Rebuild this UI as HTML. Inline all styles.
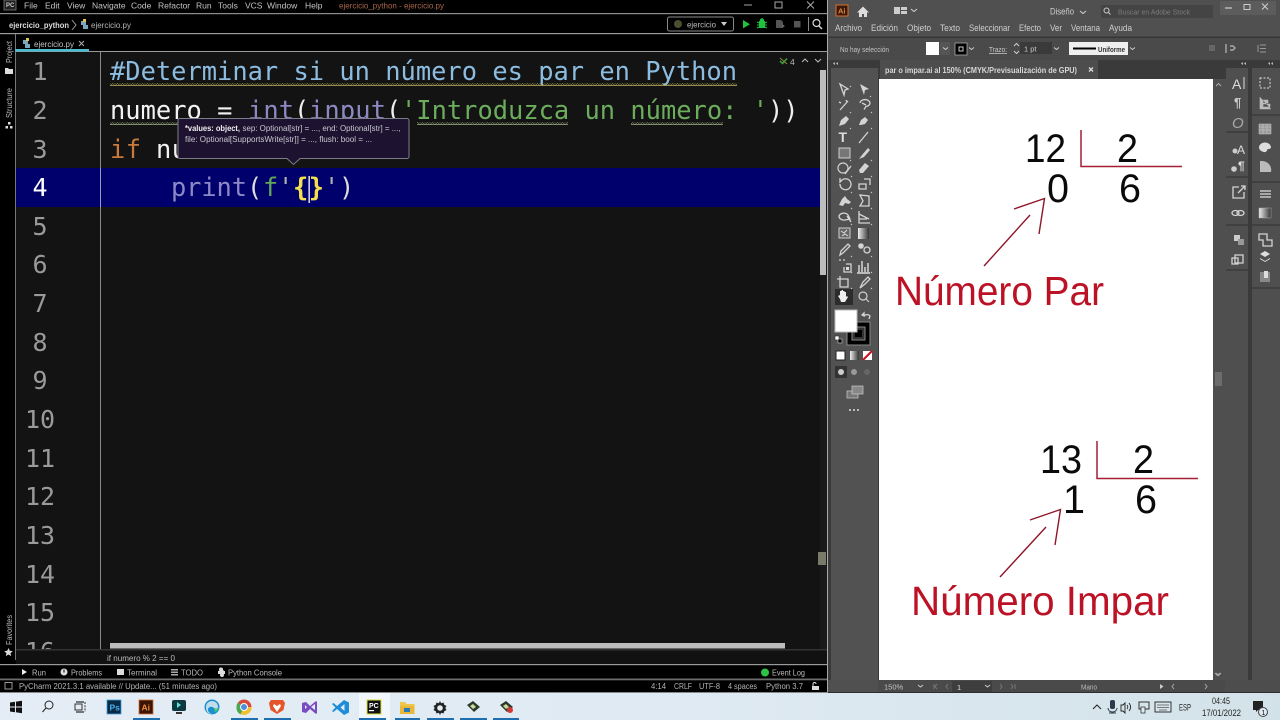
<!DOCTYPE html>
<html><head><meta charset="utf-8"><title>Screen</title>
<style>
html,body{margin:0;padding:0;width:1280px;height:720px;overflow:hidden;background:#000}
svg{display:block;filter:blur(.3px)}
text{font-family:"Liberation Sans",sans-serif;white-space:pre}
.code{font-family:"DejaVu Sans Mono","Liberation Mono",monospace;font-size:25.4px}
.ln{font-family:"DejaVu Sans Mono","Liberation Mono",monospace;font-size:25px;fill:#9a9a9a;text-anchor:middle}
.m{font-size:8.5px;fill:#c4c4c4}
.b{font-size:8.5px;fill:#c8c8c8}
.ai{font-size:8.8px;fill:#cfcfcf}
.rot{font-size:8px;fill:#bbb}
.num{font-size:40px;fill:#0a0a0a}
.red{font-size:41px;fill:#bc1226}
.ti{fill:none;stroke:#d4d4d4;stroke-width:1.3}
.tf{fill:#d4d4d4}
.tk{font-size:9.5px;fill:#222}
</style></head><body>
<svg width="1280" height="720" viewBox="0 0 1280 720" xmlns="http://www.w3.org/2000/svg">
<defs>
<pattern id="sqY" width="5" height="3" patternUnits="userSpaceOnUse"><path d="M0 2.2L1.25 .8 2.5 2.2 3.75 .8 5 2.2" fill="none" stroke="#b3a858" stroke-width=".9"/></pattern>
<pattern id="sqG" width="5" height="3" patternUnits="userSpaceOnUse"><path d="M0 2.2L1.25 .8 2.5 2.2 3.75 .8 5 2.2" fill="none" stroke="#9aaa80" stroke-width=".9"/></pattern>
<linearGradient id="tb" x1="0" x2="1" y1="0" y2="0"><stop offset="0" stop-color="#e4edf5"/><stop offset=".55" stop-color="#dfeaf2"/><stop offset="1" stop-color="#d3e2e9"/></linearGradient>
<linearGradient id="gr" x1="0" x2="1" y1="0" y2="0"><stop offset="0" stop-color="#eee"/><stop offset="1" stop-color="#333"/></linearGradient>
</defs>

<!-- PyCharm window -->
<rect width="828" height="693" fill="#000"/>
<rect x="0" y="13" width="827" height="1.2" fill="#8c8c8c"/>
<rect x="0" y="33" width="827" height="1.2" fill="#9a9a9a"/>
<rect x="15" y="51" width="812" height="1.2" fill="#9a9a9a"/>
<rect x="15" y="34" width="1" height="626" fill="#777"/>
<rect x="16" y="52" width="804" height="597" fill="#131313"/>
<rect x="16" y="168" width="804" height="39" fill="#00006c"/>
<rect x="100" y="52" width="1" height="597" fill="#8a8a8a"/>
<rect x="100" y="168" width="1" height="39" fill="#9a9ac0"/>
<rect x="820" y="52" width="7" height="597" fill="#1a1a1a"/>
<rect x="820" y="70" width="6" height="205" fill="#bdbdbd"/>
<rect x="818" y="552" width="8" height="13" fill="#7a7a6a"/>
<rect x="827" y="0" width="1" height="693" fill="#aaa"/>

<!-- menu -->
<rect x="4" y="0" width="12" height="10" fill="#222" stroke="#888" stroke-width=".7"/>
<text x="6" y="7" font-size="6" font-weight="bold" fill="#ccc">PC</text>
<text class="m" x="24" y="8.5">File</text><text class="m" x="45" y="8.5">Edit</text><text class="m" x="67" y="8.5">View</text>
<text class="m" x="92" y="8.5">Navigate</text><text class="m" x="131" y="8.5">Code</text><text class="m" x="158" y="8.5">Refactor</text>
<text class="m" x="196" y="8.5">Run</text><text class="m" x="218" y="8.5">Tools</text><text class="m" x="245" y="8.5">VCS</text>
<text class="m" x="267" y="8.5">Window</text><text class="m" x="305" y="8.5">Help</text>
<text x="339" y="8.5" font-size="8.5" fill="#a8664c" textLength="105" lengthAdjust="spacingAndGlyphs">ejercicio_python - ejercicio.py</text>
<path d="M744 5h8" stroke="#888" stroke-width="1.2"/>
<rect x="775" y="2" width="7" height="6" fill="none" stroke="#aaa"/>
<path d="M807 1.5l7 7M814 1.5l-7 7" stroke="#aaa" fill="none"/>

<!-- breadcrumb -->
<text x="9" y="28" font-size="8.5" font-weight="bold" fill="#ddd" textLength="60" lengthAdjust="spacingAndGlyphs">ejercicio_python</text>
<path d="M72 20l4 5-4 5" fill="none" stroke="#999"/>
<path d="M81 21h5v4h-5zM83 25h5v4h-5z" fill="#7aa7c0"/><rect x="83" y="19" width="3" height="3" fill="#e0c050"/>
<text x="91" y="28" font-size="8.5" fill="#b4b4b4" textLength="40" lengthAdjust="spacingAndGlyphs">ejercicio.py</text>
<rect x="667.5" y="17" width="66" height="14" rx="2" fill="#000" stroke="#8a8a8a"/>
<circle cx="678" cy="24" r="4" fill="#4d4d30"/>
<text x="687" y="27.5" font-size="8.5" fill="#bbb" textLength="29" lengthAdjust="spacingAndGlyphs">ejercicio</text>
<path d="M721 22h6l-3 4z" fill="#ccc"/>
<path d="M743 20l7 4.2-7 4.2z" fill="#22c23c"/>
<path d="M759 21h6v7h-6z" fill="#21c040"/><circle cx="762" cy="20.5" r="2.2" fill="#21c040"/><path d="M757 22l2 1M767 22l-2 1M757 25h2M765 25h2M757 28l2-1M767 28l-2-1" stroke="#21c040"/>
<path d="M776 20h5l2 2v6h-7z" fill="#555"/><path d="M782 24l3 2-3 2z" fill="#666"/>
<rect x="794" y="21" width="6.500" height="6.500" fill="#555"/>
<rect x="808" y="17" width="1" height="14" fill="#888"/>
<circle cx="816.500" cy="23" r="3.500" fill="none" stroke="#ddd" stroke-width="1.200"/><path d="M819 26l3 3" stroke="#ddd" stroke-width="1.400"/>

<!-- tab -->
<path d="M23 40h5v4h-5zM25 44h5v4h-5z" fill="#7aa7c0"/><rect x="26" y="38" width="3" height="3" fill="#e0c050"/>
<text x="34" y="47" font-size="8.500" fill="#c4c4c4" textLength="40" lengthAdjust="spacingAndGlyphs">ejercicio.py</text>
<path d="M79 41l5 5M84 41l-5 5" stroke="#aaa" fill="none"/>
<rect x="15" y="49" width="74" height="2.500" fill="#49bcd0"/>

<!-- side tool labels -->
<text class="rot" transform="translate(12 63) rotate(-90)" textLength="22" lengthAdjust="spacingAndGlyphs">Project</text>
<path d="M5 68h3l1 1h4v5H5z" fill="#ddd"/>
<text class="rot" transform="translate(12 118) rotate(-90)" textLength="30" lengthAdjust="spacingAndGlyphs">Structure</text>
<path d="M8 122h2.500v2.500H8zM5.500 126h2.500v2.500H5.500zM10 126h2.500v2.500H10z" fill="#ddd"/>
<text class="rot" transform="translate(12 645) rotate(-90)" textLength="30" lengthAdjust="spacingAndGlyphs">Favorites</text>
<path d="M8.500 648l1.300 2.800 3 .3-2.300 2 .7 3-2.700-1.600-2.700 1.600.7-3-2.300-2 3-.3z" fill="#ddd"/>

<!-- line numbers -->
<g class="ln">
<text class="ln" x="40" y="80">1</text><text class="ln" x="40" y="119">2</text><text class="ln" x="40" y="158">3</text>
<text class="ln" x="40" y="196" style="fill:#fff">4</text>
<text class="ln" x="40" y="235">5</text><text class="ln" x="40" y="273">6</text><text class="ln" x="40" y="312">7</text>
<text class="ln" x="40" y="351">8</text><text class="ln" x="40" y="389">9</text><text class="ln" x="40" y="428">10</text>
<text class="ln" x="40" y="467">11</text><text class="ln" x="40" y="505">12</text><text class="ln" x="40" y="544">13</text>
<text class="ln" x="40" y="583">14</text><text class="ln" x="40" y="621">15</text>
<text class="ln" x="40" y="660">16</text>
</g>
<rect x="16" y="649" width="84" height="15" fill="#111"/>

<!-- code -->
<text class="code" x="110" y="80" fill="#8cbce0" textLength="627">#Determinar si un número es par en Python</text>
<rect x="110" y="83" width="627" height="3" fill="url(#sqY)"/>
<text class="code" x="110" y="119" fill="#f2f2f2" textLength="122.400">numero =</text>
<text class="code" x="248" y="119" fill="#8d88c4" textLength="46">int</text>
<text class="code" x="294" y="119" fill="#eee" textLength="15.300">(</text>
<text class="code" x="309" y="119" fill="#8d88c4" textLength="77">input</text>
<text class="code" x="386" y="119" fill="#eee" textLength="15.300">(</text>
<text class="code" x="401" y="119" fill="#6cad5c" textLength="367">'Introduzca un número: '</text>
<text class="code" x="768" y="119" fill="#eee" textLength="30.600">))</text>
<rect x="110" y="122" width="68" height="3" fill="url(#sqG)"/>
<rect x="417" y="122" width="151" height="3" fill="url(#sqG)"/>
<rect x="631" y="122" width="92" height="3" fill="url(#sqG)"/>
<text class="code" x="110" y="158" fill="#c77a3c" textLength="31">if</text>
<text class="code" x="156" y="158" fill="#f2f2f2" textLength="31">nu</text>
<text class="code" x="171" y="196" fill="#8d88c8" textLength="76">print</text>
<text class="code" x="247" y="196" fill="#ddd" textLength="15.300">(</text>
<text class="code" x="263" y="196" fill="#5fa85a" textLength="15.300">f</text>
<text class="code" x="278" y="196" fill="#b0b0b0" textLength="15.300">'</text>
<text class="code" x="293" y="196" fill="#f3e04c" font-weight="bold" textLength="31">{}</text>
<text class="code" x="324" y="196" fill="#b0b0b0" textLength="15.300">'</text>
<text class="code" x="339" y="196" fill="#ddd" textLength="15.300">)</text>
<rect x="308.500" y="176" width="1.300" height="27" fill="#fff"/>

<!-- inspection widget -->
<path d="M780 61l2.500 2.500 4.500-5" fill="none" stroke="#3fa040" stroke-width="1.500"/><path d="M780 58l7 6" stroke="#8a8a30"/>
<text x="790" y="65" font-size="8.500" fill="#bbb">4</text>
<path d="M802 62l3-3 3 3M815 59l3 3 3-3" fill="none" stroke="#bbb"/>

<!-- tooltip -->
<path d="M180 118.500h227a2 2 0 0 1 2 2v36a2 2 0 0 1-2 2H300l-6.500 6-6.500-6H180a2 2 0 0 1-2-2v-36a2 2 0 0 1 2-2z" fill="#1d1230" stroke="#7d7d88"/>
<text x="185" y="131" font-size="8" font-weight="bold" fill="#f0f0f0" textLength="55" lengthAdjust="spacingAndGlyphs">*values: object,</text>
<text x="242.500" y="131" font-size="8" fill="#c9c9d0" textLength="158" lengthAdjust="spacingAndGlyphs">sep: Optional[str] = ..., end: Optional[str] = ...,</text>
<text x="185" y="142" font-size="8" fill="#c9c9d0" textLength="187" lengthAdjust="spacingAndGlyphs">file: Optional[SupportsWrite[str]] = ..., flush: bool = ...</text>

<!-- bottom panels -->
<rect x="16" y="649" width="811" height="15" fill="#111"/>
<rect x="16" y="649" width="811" height="1.500" fill="#333"/>
<rect x="110" y="643" width="675" height="5.500" fill="#bdbdbd"/>
<text x="107" y="661" font-size="8.500" fill="#b8b8b8" textLength="68" lengthAdjust="spacingAndGlyphs">if numero % 2 == 0</text>
<rect x="0" y="664" width="827" height="1.200" fill="#9a9a9a"/>
<rect x="0" y="678.500" width="827" height="1.800" fill="#6c6c6c"/>
<rect x="0" y="692" width="828" height="1" fill="#888"/>
<path d="M22 669l5 3-5 3z" fill="#eee"/>
<text x="32" y="675.500" font-size="8" fill="#bbb" textLength="14" lengthAdjust="spacingAndGlyphs">Run</text>
<circle cx="64" cy="672" r="3.500" fill="#ddd"/><rect x="63.500" y="669.500" width="1" height="3" fill="#000"/>
<text x="71" y="675.500" font-size="8" fill="#bbb" textLength="31" lengthAdjust="spacingAndGlyphs">Problems</text>
<rect x="117" y="669" width="7" height="6" fill="#ddd"/>
<text x="127" y="675.500" font-size="8" fill="#bbb" textLength="30" lengthAdjust="spacingAndGlyphs">Terminal</text>
<path d="M171 669h7v1.500h-7zM171 671.500h7v1.500h-7zM171 674h7v1.500h-7z" fill="#aaa"/>
<text x="181" y="675.500" font-size="8" fill="#bbb" textLength="22" lengthAdjust="spacingAndGlyphs">TODO</text>
<path d="M219 672a2.500 3 0 0 1 5 0zM218 671h7v3h-7z" fill="#ddd"/><circle cx="221" cy="669.500" r="2" fill="#ddd"/><circle cx="222" cy="675" r="2" fill="#ddd"/>
<text x="228" y="675.500" font-size="8" fill="#bbb" textLength="54" lengthAdjust="spacingAndGlyphs">Python Console</text>
<circle cx="765" cy="672.500" r="4" fill="#2fc245"/>
<text x="772" y="675.500" font-size="8" fill="#bbb" textLength="33" lengthAdjust="spacingAndGlyphs">Event Log</text>
<rect x="5" y="682.500" width="7" height="6.500" fill="none" stroke="#999"/>
<text x="19" y="689" font-size="8" fill="#b4b4b4" textLength="198" lengthAdjust="spacingAndGlyphs">PyCharm 2021.3.1 available // Update... (51 minutes ago)</text>
<text x="651" y="689" font-size="8" fill="#b4b4b4" textLength="15" lengthAdjust="spacingAndGlyphs">4:14</text>
<text x="674" y="689" font-size="8" fill="#b4b4b4" textLength="18" lengthAdjust="spacingAndGlyphs">CRLF</text>
<text x="699" y="689" font-size="8" fill="#b4b4b4" textLength="21" lengthAdjust="spacingAndGlyphs">UTF-8</text>
<text x="728" y="689" font-size="8" fill="#b4b4b4" textLength="29" lengthAdjust="spacingAndGlyphs">4 spaces</text>
<text x="766" y="689" font-size="8" fill="#b4b4b4" textLength="37" lengthAdjust="spacingAndGlyphs">Python 3.7</text>
<path d="M812 686h7v4h-7z" fill="#ddd"/><path d="M813 686v-2a1.500 1.500 0 0 1 3 0" fill="none" stroke="#ddd"/>

<!-- Illustrator -->
<rect x="828" y="0" width="452" height="693" fill="#505050"/>
<rect x="836" y="5" width="12" height="11" fill="#3a1a0c" stroke="#d8702c"/>
<text x="838" y="13.500" font-size="7.500" font-weight="bold" fill="#e8853a">Ai</text>
<path d="M857 12.500l6-6 6 6h-2v4.500h-3v-3h-2v3h-3v-4.500z" fill="#ddd"/>
<path d="M894 7h6v7h-6zM901 7h6v3h-6zM901 11h6v3h-6z" fill="#ccc"/>
<path d="M911 9l3 2.500 3-2.500M1080 11l3 2.500 3-2.500" fill="none" stroke="#ccc" stroke-width="1.100"/>
<text class="ai" x="1050" y="14.500" textLength="24" lengthAdjust="spacingAndGlyphs">Diseño</text>
<rect x="1101" y="5" width="112" height="13" fill="#444"/>
<circle cx="1106.500" cy="10.500" r="2.500" fill="none" stroke="#ccc"/><path d="M1108.500 12.500l2 2" stroke="#ccc"/>
<text x="1118" y="14.500" font-size="7.500" fill="#7c7c7c" textLength="72" lengthAdjust="spacingAndGlyphs">Buscar en Adobe Stock</text>
<rect x="1220" y="1" width="56" height="14" fill="#5c5c5c"/>
<path d="M1225 8h7" stroke="#ccc" stroke-width="1.200"/><rect x="1244" y="4.500" width="6" height="5" fill="none" stroke="#ccc"/><path d="M1262 3.500l6 6M1268 3.500l-6 6" stroke="#ccc" stroke-width="1.100"/>

<text class="ai" x="835" y="31" textLength="27" lengthAdjust="spacingAndGlyphs">Archivo</text>
<text class="ai" x="871" y="31" textLength="27" lengthAdjust="spacingAndGlyphs">Edición</text>
<text class="ai" x="907" y="31" textLength="24" lengthAdjust="spacingAndGlyphs">Objeto</text>
<text class="ai" x="940" y="31" textLength="20" lengthAdjust="spacingAndGlyphs">Texto</text>
<text class="ai" x="969" y="31" textLength="41" lengthAdjust="spacingAndGlyphs">Seleccionar</text>
<text class="ai" x="1019" y="31" textLength="22" lengthAdjust="spacingAndGlyphs">Efecto</text>
<text class="ai" x="1050" y="31" textLength="12" lengthAdjust="spacingAndGlyphs">Ver</text>
<text class="ai" x="1071" y="31" textLength="29" lengthAdjust="spacingAndGlyphs">Ventana</text>
<text class="ai" x="1109" y="31" textLength="23" lengthAdjust="spacingAndGlyphs">Ayuda</text>

<rect x="828" y="37" width="452" height="23" fill="#4a4a4a"/>
<rect x="828" y="36.500" width="452" height="1.500" fill="#363636"/>
<rect x="828" y="60" width="452" height="20" fill="#3a3a3a"/>
<text x="840" y="52" font-size="7" fill="#c4c4c4" textLength="49" lengthAdjust="spacingAndGlyphs">No hay selección</text>
<rect x="926" y="42" width="13" height="13" fill="#fff"/>
<rect x="940" y="42" width="10" height="13" fill="#555"/>
<path d="M943 47.500l2.500 2 2.500-2M969 47.500l2.500 2 2.500-2M1054 47.500l2.500 2 2.500-2M1130 47.500l2.500 2 2.500-2" fill="none" stroke="#ccc"/>
<rect x="955" y="43" width="12" height="12" fill="#000" stroke="#aaa" stroke-width=".8"/>
<rect x="959" y="47" width="4" height="4" fill="none" stroke="#ccc"/>
<text x="989" y="52" font-size="7.500" fill="#ccc" text-decoration="underline" textLength="18" lengthAdjust="spacingAndGlyphs">Trazo:</text>
<path d="M1014 46l2.500-2.500 2.500 2.500M1014 51l2.500 2.500 2.500-2.500" fill="none" stroke="#ccc"/>
<rect x="1020" y="42" width="32" height="12" fill="#3a3a3a"/>
<text x="1024" y="51.500" font-size="7.500" fill="#ccc">1 pt</text>
<rect x="1069" y="42" width="59" height="13" fill="#eee"/>
<rect x="1073" y="47.500" width="23" height="2" fill="#000"/>
<text x="1098" y="52" font-size="7.500" font-weight="bold" fill="#333" textLength="27" lengthAdjust="spacingAndGlyphs">Uniforme</text>
<rect x="1209" y="45" width="6" height="6" fill="#666"/>
<path d="M1226 44v9M1230 46h3l2 2-2 2h-3" fill="none" stroke="#bbb" stroke-width="1.200"/>
<path d="M1258 45v7M1260 45h6M1260 48.500h6M1260 52h6" fill="none" stroke="#999"/>
<path d="M835 62l-2 1.500 2 1.500zM838 62l-2 1.500 2 1.500zM1243 62l-2 1.500 2 1.500zM1246 62l-2 1.500 2 1.500zM1270 62l-2 1.500 2 1.500zM1273 62l-2 1.500 2 1.500z" fill="#bbb"/>
<rect x="880" y="60" width="218" height="19" fill="#4d4d4d"/>
<text x="885" y="73" font-size="8" font-weight="bold" fill="#d8d8d8" textLength="192" lengthAdjust="spacingAndGlyphs">par o impar.ai al 150% (CMYK/Previsualización de GPU)</text>
<path d="M1089 67.500l4 4M1093 67.500l-4 4" stroke="#ddd" stroke-width="1.300"/>

<!-- panels bg -->
<rect x="828" y="66" width="52" height="614" fill="#3a3a3a"/>
<rect x="831" y="68" width="47" height="612" fill="#525252"/>
<rect x="879" y="79" width="334" height="601" fill="#fff"/>
<rect x="1213" y="79" width="13" height="601" fill="#4f4f4f"/>
<rect x="1215" y="372" width="7" height="14" fill="#6c6c6c"/>
<rect x="1213" y="66" width="67" height="14" fill="#3a3a3a" opacity="0"/>
<rect x="1226" y="66" width="54" height="614" fill="#3a3a3a"/>
<rect x="1226" y="68" width="22" height="612" fill="#4f4f4f"/>
<rect x="1252" y="68" width="28" height="612" fill="#4f4f4f"/>
<path d="M1226 132h22M1226 177h22M1226 225h22M1226 270h22M1252 115h28M1252 182h28M1252 225h28M1252 288h28" stroke="#383838" stroke-width="1.200"/>
<path d="M1216 86l2.500-2.500 2.500 2.500M1215 673l2.500 2.500 2.500-2.500" fill="none" stroke="#aaa"/>

<!-- left tools -->
<g>
<path class="ti" d="M840 84l8 5-3 1-1 5z"/>
<path class="tf" d="M860 84l9 5-4 1-1 5z"/>
<path class="ti" d="M840 110l8-9M839 102l2 1M846 100l1 2"/>
<path class="ti" d="M860 103a5 3.500 0 1 1 6 3.500l-2 3M862 103l4 2"/>
<path class="tf" d="M839 126l2-6 5-4 3 3-4 5z"/>
<path class="tf" d="M859 125l2-5 4-3 3 3-3 4-4 1z"/>
<text x="838.500" y="142" font-family="Liberation Serif" font-size="14" font-weight="bold" fill="#ddd">T</text>
<path class="ti" d="M859 143l9-11"/>
<rect x="839" y="148" width="11" height="10" fill="#777" stroke="#cfcfcf"/>
<path class="tf" d="M859 159l3-4 6-7 2 2-6 7z"/>
<circle cx="843" cy="168" r="5" fill="none" stroke="#cfcfcf" stroke-width="1.200"/><path class="ti" d="M845 174l6-8"/>
<path class="tf" d="M859 170l6-7 4 3-6 7h-3z"/>
<path class="ti" d="M840 184a5.500 5.500 0 1 0 2-4l-2 2v-4"/>
<path class="ti" d="M859 184h7v5h-7zM864 179h6v6"/>
<path class="tf" d="M839 205l3-6 3-3 2 3 4 3-2 2-4-1-2 3z"/>
<path class="ti" d="M860 195l9 1v10h-9l3-5zM860 195v1"/>
<path class="ti" d="M839 216a5 4 0 0 1 9-1l2 4-5 1a5 4 0 0 1-6-4zM847 216l4 6"/>
<path class="ti" d="M859 211v12h11M859 214l10 5M859 219h8"/>
<rect x="839" y="228" width="11" height="10" fill="#666" stroke="#cfcfcf"/><path d="M841 231l3 2 3-3M842 236l3-2 3 2" stroke="#ddd" fill="none"/>
<rect x="858" y="228" width="11" height="11" fill="url(#gr)"/>
<path class="ti" d="M840 255l1-4 7-7 2 2-7 7z"/>
<circle cx="861" cy="246" r="2.800" class="tf"/><circle cx="867" cy="250" r="3" class="ti"/>
<path class="ti" d="M839 260h2M843 260h2M846 264h5v8h-7v-5"/><rect x="846" y="267" width="3" height="3" fill="#ddd"/>
<path d="M859 272v-7M862 272v-11M865 272v-5M868 272v-9M857 273h13" stroke="#ddd" stroke-width="1.400" fill="none"/>
<path class="ti" d="M840 279h8v8h-8zM840 276v3h-3"/>
<path class="ti" d="M860 288l3-6 5-5 2 2-5 5z"/>
<rect x="835" y="289" width="18" height="16" fill="#2c2c2c"/>
<path d="M840 299l-2-3 2-1v-4h1.500v-1h1.500v1h1.500v1h1.500v5l1-1 1 1-3 5h-4z" fill="#eee"/>
<circle cx="863" cy="296" r="4" fill="none" stroke="#cfcfcf" stroke-width="1.200"/><path d="M866 299l3 3" stroke="#cfcfcf" stroke-width="1.200"/>
<rect x="847" y="322" width="23" height="23" fill="#000" stroke="#888"/>
<rect x="852" y="327" width="13" height="13" fill="#333" stroke="#888"/>
<rect x="855" y="330" width="7" height="7" fill="#000"/>
<rect x="835" y="310" width="22" height="22" fill="#fff" stroke="#bbb"/>
<path class="ti" d="M864 316a4 4 0 0 1 6 0l-1 3M862 315l2-2v3z"/>
<rect x="835" y="336" width="4" height="4" fill="#fff" stroke="#333" stroke-width=".6"/><rect x="838" y="339" width="4" height="4" fill="#000" stroke="#ccc" stroke-width=".6"/>
<rect x="836" y="351" width="9" height="9" fill="#fff" stroke="#222"/>
<rect x="850" y="351" width="9" height="9" fill="url(#gr)"/>
<rect x="863" y="351" width="9" height="9" fill="#fff"/><path d="M863 360l9-9" stroke="#d01020" stroke-width="2"/>
<rect x="835" y="366" width="12" height="12" fill="#333"/>
<circle cx="841" cy="372" r="3" fill="#ccc"/>
<circle cx="854" cy="372" r="3" fill="#999"/><circle cx="867" cy="372" r="3" fill="#666"/>
<rect x="847" y="391" width="11" height="7" fill="#777" stroke="#ccc" stroke-width=".7"/><rect x="852" y="386" width="11" height="8" fill="#888" stroke="#ccc" stroke-width=".7"/>
<circle cx="850" cy="410" r="1" fill="#ddd"/><circle cx="854" cy="410" r="1" fill="#ddd"/><circle cx="858" cy="410" r="1" fill="#ddd"/>
<path d="M850 86l1 1M870 96l1 1M850 112l1 1M871 112l1 1M850 128l1 1M871 128l1 1M850 160l1 1M871 160l1 1M851 176l1 1M871 176l1 1M851 192l1 1M871 192l1 1M851 208l1 1M871 208l1 1M851 224l1 1M871 224l1 1M851 256l1 1M871 256l1 1M851 272l1 1M871 272l1 1M851 288l1 1M871 288l1 1" stroke="#ccc"/>
</g>

<!-- right panel icons -->
<g>
<text x="1232" y="89" font-size="14" fill="#ddd">A</text><path d="M1244 77v12" stroke="#ddd"/>
<text x="1234" y="107" font-size="13" font-weight="bold" fill="#ccc">¶</text>
<text x="1232" y="128" font-family="Liberation Serif" font-size="15" font-style="italic" fill="#aaa">O</text>
<text x="1237" y="154" font-size="12" fill="#ddd">A</text><circle cx="1235" cy="151" r="2.500" fill="#ccc"/>
<circle cx="1234" cy="169" r="2.800" fill="#ccc"/><text x="1238" y="170" font-size="12" font-weight="bold" fill="#ddd">¶</text>
<path class="ti" d="M1239 187h-6v11h11v-6M1238 193l7-7M1241 186h4v4"/>
<path class="ti" d="M1232 213a3.500 2.500 0 0 1 7 0 3.500 2.500 0 0 1-7 0zM1237 213a3.500 2.500 0 0 1 7 0 3.500 2.500 0 0 1-7 0z"/>
<rect x="1234" y="235" width="6" height="6" fill="#ccc"/><rect x="1238" y="239" width="6" height="6" fill="#999"/>
<path class="ti" d="M1235 255h8v8h-8zM1232 258h6v6h-6z"/>
<rect x="1260" y="78" width="10" height="10" fill="none" stroke="#ddd" stroke-dasharray="2 1.500"/>
<path d="M1260 97v12h11M1263 100h5v3h-5zM1263 104h7v3h-7z" fill="#bbb" stroke="#bbb" stroke-width=".6"/>
<path d="M1259 124h12v10h-12zM1259 127h12M1259 130h12M1263 124v10M1267 124v10" fill="#999" stroke="#ccc" stroke-width=".5"/>
<path d="M1259 148a6 5 0 0 1 12-1c0 2-2 2-3 2s-1 4-4 3a6 5 0 0 1-5-4z" fill="#ddd"/>
<path d="M1260 161h2a9 9 0 0 1 9 11h-11z" fill="#bbb"/>
<path d="M1260 191h11M1260 194h11M1260 197h11" stroke="#ddd" stroke-width="1.300"/>
<rect x="1259" y="208" width="12" height="10" fill="url(#gr)" stroke="#aaa" stroke-width=".5"/>
<path class="ti" d="M1259 234h8v6h5v6h-9v-6h-4z"/>
<path d="M1265 251l5 3-5 3-5-3zM1260 258l5 3 5-3v1l-5 3-5-3z" fill="#ddd"/>
<path d="M1260 272h10v10h-10z" fill="#888"/><rect x="1264" y="271" width="4" height="7" fill="#ddd"/>
</g>

<!-- artwork -->
<text class="num" x="1025" y="162" textLength="41" lengthAdjust="spacingAndGlyphs">12</text>
<text class="num" x="1117" y="162" textLength="21" lengthAdjust="spacingAndGlyphs">2</text>
<text class="num" x="1047" y="202" textLength="22" lengthAdjust="spacingAndGlyphs">0</text>
<text class="num" x="1119" y="202" textLength="22" lengthAdjust="spacingAndGlyphs">6</text>
<path d="M1081 130v36.500h101" fill="none" stroke="#a31f33" stroke-width="1.500"/>
<path d="M984 266l46-51M1014 209l30.500-10.500-5.500 35.500" fill="none" stroke="#8e1628" stroke-width="1.400"/>
<text class="red" x="895" y="305" textLength="209" lengthAdjust="spacingAndGlyphs">Número Par</text>

<text class="num" x="1040" y="473" textLength="42" lengthAdjust="spacingAndGlyphs">13</text>
<text class="num" x="1133" y="473" textLength="21" lengthAdjust="spacingAndGlyphs">2</text>
<text class="num" x="1063" y="513" textLength="22" lengthAdjust="spacingAndGlyphs">1</text>
<text class="num" x="1135" y="513" textLength="22" lengthAdjust="spacingAndGlyphs">6</text>
<path d="M1097 441v37.500h101" fill="none" stroke="#a31f33" stroke-width="1.500"/>
<path d="M1000 577l46-50M1030 520l30.500-10.500-5.500 35.500" fill="none" stroke="#8e1628" stroke-width="1.400"/>
<text class="red" x="911" y="615" textLength="258" lengthAdjust="spacingAndGlyphs">Número Impar</text>

<!-- AI status bar -->
<rect x="878" y="680" width="347" height="13" fill="#4a4a4a"/>
<rect x="828" y="680" width="50" height="13" fill="#505050"/>
<rect x="1225" y="680" width="55" height="13" fill="#4d4d4d"/>
<text x="884" y="689.500" font-size="7.500" fill="#c4c4c4">150%</text>
<path d="M918 685l2.500 2 2.500-2M985 685l2.500 2 2.500-2" fill="none" stroke="#ccc"/>
<path d="M934 684v5M937 684l-2 2.500 2 2.500M948 684l-2 2.500 2 2.500M1000 684l2 2.500-2 2.500M1011 684l2 2.500-2 2.500M1015 684v5" fill="none" stroke="#777"/>
<rect x="952" y="681" width="40" height="11" fill="#3e3e3e"/>
<text x="957" y="690" font-size="7.500" fill="#ddd">1</text>
<path d="M985 685l2.500 2 2.500-2" fill="none" stroke="#ccc"/>
<text x="1081" y="689.500" font-size="7" fill="#bbb" textLength="16" lengthAdjust="spacingAndGlyphs">Mano</text>
<path d="M1160 684l3.500 2.500-3.500 2.500z" fill="#ccc"/>
<path d="M1174 684l-2 2.500 2 2.500M1205 684l2 2.500-2 2.500" fill="none" stroke="#aaa"/>
<path d="M1216 673l2.500 2.500 2.500-2.500" fill="none" stroke="#aaa"/>
<rect x="828" y="692" width="452" height="1" fill="#2e2e2e"/>

<!-- Taskbar -->
<rect x="0" y="693" width="1280" height="27" fill="url(#tb)"/>
<path d="M10 702.500l5-.7v4.700h-5zM16 701.600l6-.9v5.800h-6zM10 707.500h5v4.700l-5-.7zM16 707.500h6v5.700l-6-.9z" fill="#111"/>
<circle cx="49" cy="705" r="4" fill="none" stroke="#222" stroke-width="1"/><path d="M46 708l-3.500 4" stroke="#222" stroke-width="1"/>
<path d="M76 702h8M76 712h8" stroke="#333" stroke-width="1.200"/><rect x="75" y="704" width="7" height="6" fill="none" stroke="#333"/><path d="M85 702v10" stroke="#333" stroke-dasharray="2 1.200"/>
<rect x="107" y="700" width="14" height="14" fill="#0a2a44" stroke="#3aa0e0" stroke-width=".8"/><text x="109.500" y="710.500" font-size="8.500" font-weight="bold" fill="#4ab0f0">Ps</text>
<rect x="139" y="700" width="14" height="14" fill="#3a1408" stroke="#d8702c" stroke-width=".8"/><text x="141.500" y="710.500" font-size="8.500" font-weight="bold" fill="#f09030">Ai</text>
<rect x="172" y="700" width="14" height="11" rx="2" fill="#0c3a3e"/><path d="M177 702l4 3-4 3z" fill="#5fe0e0"/><rect x="176" y="712" width="6" height="2" fill="#333"/>
<circle cx="212" cy="707" r="7.500" fill="#1a8fd0"/><path d="M206 707a6 6 0 0 1 12 0c0 2-3 2-4 1a3.500 3.500 0 0 0-6 1 4 4 0 0 0 6 4c-4 2-8 0-8-6z" fill="#dfeaf2" opacity=".85"/><path d="M215 712a7 7 0 0 0 4-4l-5 1z" fill="#46c86a"/>
<circle cx="244" cy="707" r="7.500" fill="#d84a3a"/><path d="M244 707l-3.500 7.500a7.500 7.500 0 0 1-4-7.500 7.500 7.500 0 0 1 1.500-4.500z" fill="#4aa850"/><path d="M244 707l7.500 0a7.500 7.500 0 0 1-11 7z" fill="#f0c030"/><circle cx="244" cy="707" r="3.500" fill="#4a8fe0" stroke="#fff"/>
<path d="M271 700h12l2 3-1.500 7-6.500 4-6.500-4-1.500-7z" fill="#e4562a"/><path d="M274 704l3 2 3-2 1 2-4 6-4-6z" fill="#fff"/>
<path d="M302 703l4-1 4 4 6-5 1 1v11l-1 1-6-5-4 4-4-1zM305 705v4l2-2zM311 707l4 3v-6z" fill="#7b4cc0" fill-rule="evenodd"/>
<path d="M344 700l5 2.500v10l-5 2.500-7-6-3.500 3-1.500-1 3.500-3.500-3.500-3.500 1.500-1 3.500 3zM344.500 704l-4 3.500 4 3.500z" fill="#1e8cd8" fill-rule="evenodd"/>
<rect x="359" y="693" width="31" height="27" fill="#f2f7fb"/>
<rect x="367" y="700" width="14" height="14" fill="#111" stroke="#d8e040" stroke-width="1"/><text x="369" y="708" font-size="7" font-weight="bold" fill="#fff">PC</text><rect x="369" y="710" width="5" height="1.200" fill="#fff"/>
<path d="M400 702h5l1.500 2h8v10h-14.500z" fill="#f0c64a"/><rect x="400" y="706" width="14.500" height="8" fill="#e9b838"/><rect x="404" y="708" width="6" height="4" fill="#2a7ab8"/>
<path d="M440 701l1.200 2.200 2.300-.7.700 2.300 2.300 1.200-1.200 2 1.200 2-2.300 1.200-.7 2.300-2.300-.7-1.200 2.200-1.200-2.200-2.300.7-.7-2.300-2.300-1.200 1.200-2-1.200-2 2.300-1.200.7-2.300 2.300.7z" fill="#222"/><circle cx="440" cy="708" r="2.800" fill="#e0ebf3"/>
<path d="M467 705l6-4 7 6-6 5z" fill="#2a3a2a"/><path d="M470 706l3-2 3 3-3 2z" fill="#d0d8a0"/>
<path d="M500 705l6-4 7 6-6 5z" fill="#2a3a2a"/><path d="M503 706l3-2 3 3-3 2z" fill="#d0d8a0"/><circle cx="510" cy="710" r="3" fill="#d03a3a"/>
<path d="M133 718h27v2h-27zM231 718h27v2h-27zM264 718h27v2h-27zM359 718h27v2h-27zM395 718h25v2h-25zM427 718h27v2h-27zM460 718h27v2h-27zM493 718h26v2h-26z" fill="#1f6fb0"/>

<path d="M1093 709l4-4 4 4" fill="none" stroke="#222" stroke-width="1"/>
<rect x="1110" y="700" width="5" height="9" rx="2" fill="#2a3a4a"/><path d="M1108 708a4.500 4 0 0 0 9 0M1109 713h7" stroke="#2a3a4a" fill="none"/>
<path d="M1121 705h2l2-2v10l-2-2h-2z" fill="none" stroke="#222" stroke-width=".9"/><path d="M1127 705a3 3 0 0 1 0 4M1129 703a6 6 0 0 1 0 8" fill="none" stroke="#222" stroke-width=".9"/>
<rect x="1139" y="702" width="10" height="7" fill="none" stroke="#222" stroke-width=".9"/><rect x="1141" y="707" width="4" height="6" fill="#dfeaf2" stroke="#222" stroke-width=".7"/>
<rect x="1155" y="702" width="16" height="10" fill="none" stroke="#222" stroke-width=".9"/><path d="M1157 705h12M1157 707.500h12M1159 710h8" stroke="#555" stroke-width=".8"/>
<text class="tk" x="1179" y="710.500" textLength="12" lengthAdjust="spacingAndGlyphs">ESP</text>
<text class="tk" x="1212" y="704" textLength="18" lengthAdjust="spacingAndGlyphs">04:45</text>
<text class="tk" x="1202" y="716" textLength="39" lengthAdjust="spacingAndGlyphs">17/01/2022</text>
<path d="M1253 701h10v9h-5l-2 2v-2h-3z" fill="#222"/>
<circle cx="1263" cy="712" r="4.500" fill="#dfeaf2" stroke="#444"/><text x="1261.500" y="715" font-size="7" fill="#111">1</text>
</svg>
</body></html>
